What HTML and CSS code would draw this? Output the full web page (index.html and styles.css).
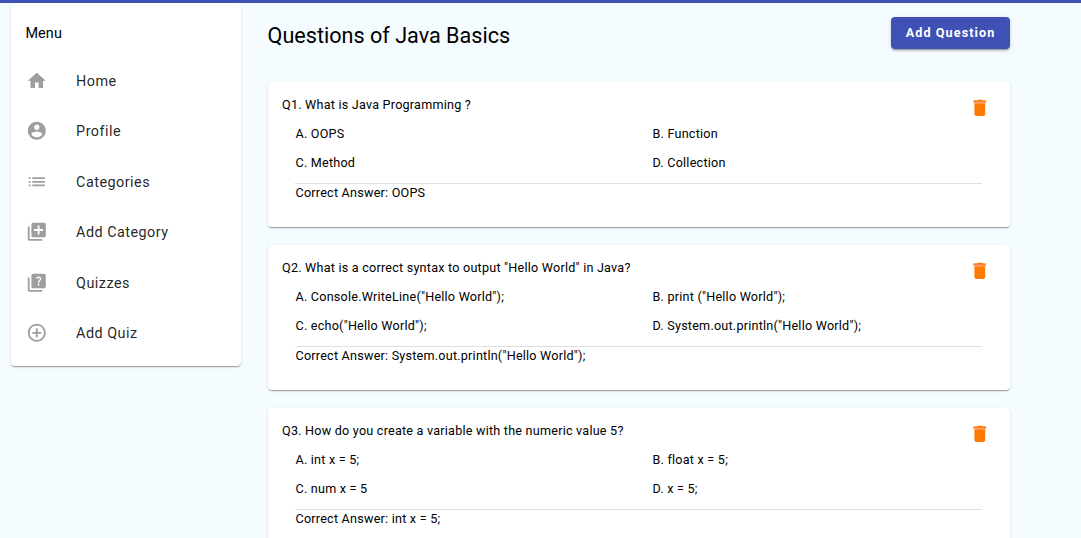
FILE: index.html
```html
<!DOCTYPE html>
<html lang="en">
<head>
    <meta charset="UTF-8">
    <meta name="viewport" content="width=device-width, initial-scale=1.0">
    <title>Questions of Java Basics</title>
    <link rel="stylesheet" href="styles.css">
</head>
<body>
    <div class="toolbar"></div>
    <div class="layout">
        <nav class="sidebar">
            <h3 class="menu-title">Menu</h3>
            <ul class="menu">
                <li>
                    <svg viewBox="0 0 24 24"><path d="M10 20v-6h4v6h5v-8h3L12 3 2 12h3v8z"/></svg>
                    <span>Home</span>
                </li>
                <li>
                    <svg viewBox="0 0 24 24"><path d="M12 2C6.48 2 2 6.48 2 12s4.48 10 10 10 10-4.48 10-10S17.52 2 12 2zm0 3c1.66 0 3 1.34 3 3s-1.34 3-3 3-3-1.34-3-3 1.34-3 3-3zm0 14.2c-2.5 0-4.71-1.28-6-3.22.03-1.99 4-3.08 6-3.08 1.99 0 5.97 1.09 6 3.08-1.29 1.94-3.5 3.22-6 3.22z"/></svg>
                    <span>Profile</span>
                </li>
                <li>
                    <svg viewBox="0 0 24 24"><path d="M3 13h2v-2H3v2zm0 4h2v-2H3v2zm0-8h2V7H3v2zm4 4h14v-2H7v2zm0 4h14v-2H7v2zM7 7v2h14V7H7z"/></svg>
                    <span>Categories</span>
                </li>
                <li>
                    <svg viewBox="0 0 24 24"><path d="M4 6H2v14c0 1.1.9 2 2 2h14v-2H4V6zm16-4H8c-1.1 0-2 .9-2 2v12c0 1.1.9 2 2 2h12c1.1 0 2-.9 2-2V4c0-1.1-.9-2-2-2zm-1 9h-4v4h-2v-4H9V9h4V5h2v4h4v2z"/></svg>
                    <span>Add Category</span>
                </li>
                <li>
                    <svg viewBox="0 0 24 24"><path d="M4 6H2v14c0 1.1.9 2 2 2h14v-2H4V6zm16-4H8c-1.1 0-2 .9-2 2v12c0 1.1.9 2 2 2h12c1.1 0 2-.9 2-2V4c0-1.1-.9-2-2-2zm-5.99 13c-.59 0-1.05-.47-1.05-1.05 0-.59.47-1.04 1.05-1.04.59 0 1.04.45 1.04 1.04-.01.58-.45 1.05-1.04 1.05zm2.5-6.17c-.63.93-1.23 1.21-1.56 1.81-.13.24-.18.4-.18 1.18h-1.52c0-.41-.06-1.08.26-1.65.41-.73 1.18-1.16 1.63-1.8.48-.68.21-1.94-1.14-1.94-.88 0-1.32.67-1.5 1.23l-1.37-.57C11.51 5.96 12.52 5 13.99 5c1.23 0 2.08.56 2.51 1.26.37.61.58 1.73.01 2.57z"/></svg>
                    <span>Quizzes</span>
                </li>
                <li>
                    <svg viewBox="0 0 24 24"><path d="M13 7h-2v4H7v2h4v4h2v-4h4v-2h-4V7zm-1-5C6.48 2 2 6.48 2 12s4.48 10 10 10 10-4.48 10-10S17.52 2 12 2zm0 18c-4.41 0-8-3.59-8-8s3.59-8 8-8 8 3.59 8 8-3.59 8-8 8z"/></svg>
                    <span>Add Quiz</span>
                </li>
            </ul>
        </nav>
        <main class="content">
            <div class="page-header">
                <h1>Questions of Java Basics</h1>
                <button class="add-btn">Add Question</button>
            </div>
            <div id="questionList"></div>
        </main>
    </div>
    <script>
        const questions = [
            {
                text: 'What is Java Programming ?',
                options: ['OOPS', 'Function', 'Method', 'Collection'],
                answer: 'OOPS'
            },
            {
                text: 'What is a correct syntax to output "Hello World" in Java?',
                options: ['Console.WriteLine("Hello World");', 'print ("Hello World");', 'echo("Hello World");', 'System.out.println("Hello World");'],
                answer: 'System.out.println("Hello World");'
            },
            {
                text: 'How do you create a variable with the numeric value 5?',
                options: ['int x = 5;', 'float x = 5;', 'num x = 5', 'x = 5;'],
                answer: 'int x = 5;'
            }
        ];
        const questionList = document.getElementById('questionList');
        questions.forEach((question, index) => {
            const card = document.createElement('div');
            card.className = 'card';
            card.innerHTML = `
                <div class="card-head">
                    <p>Q${index + 1}. ${question.text}</p>
                    <svg class="delete" viewBox="0 0 24 24"><path class="lid" d="M5 4h14v3H5z"/><path d="M6 19c0 1.1.9 2 2 2h8c1.1 0 2-.9 2-2V7H6v12z"/><path d="M19 4h-3.5l-1-1h-5l-1 1H5v1.2h14z"/></svg>
                </div>
                <div class="options">
                    ${question.options.map((option, i) => `<p>${'ABCD'[i]}. ${option}</p>`).join('')}
                </div>
                <p class="answer">Correct Answer: ${question.answer}</p>
            `;
            questionList.appendChild(card);
        });
    </script>
</body>
</html>
```
FILE: styles.css
```css
* {
    box-sizing: border-box;
}
body {
    margin: 0;
    height: 100vh;
    overflow: hidden;
    background: #f4fcff;
    font-family: Roboto, Arial, sans-serif;
    color: rgba(0, 0, 0, 0.87);
}
h1, h3, p, ul {
    margin: 0;
    padding: 0;
    font-weight: 400;
}
.toolbar {
    height: 3px;
    background: #3f51b5;
}
.layout {
    display: flex;
    align-items: flex-start;
}
.sidebar, .card {
    background: white;
    border-radius: 4px;
    box-shadow: 0 2px 1px -1px rgba(0, 0, 0, 0.2), 0 1px 1px 0 rgba(0, 0, 0, 0.14), 0 1px 3px 0 rgba(0, 0, 0, 0.12);
}
.sidebar {
    width: 230px;
    height: 363px;
    margin-left: 11px;
}
.menu-title {
    padding: 20px 14.4px 0;
    font-size: 14.4px;
    line-height: 21px;
    letter-spacing: 0.13px;
    color: black;
}
.menu {
    margin-top: 11.6px;
    list-style: none;
}
.menu li {
    display: flex;
    align-items: center;
    gap: 28.8px;
    height: 50.4px;
    padding-left: 14.7px;
    font-size: 14.4px;
    letter-spacing: 0.47px;
}
.menu span {
    padding-top: 1.4px;
}
.menu svg {
    width: 21.6px;
    height: 21.6px;
    fill: #9e9e9e;
}
.content {
    width: 742px;
    margin-left: 27px;
}
.page-header {
    display: flex;
    justify-content: space-between;
    align-items: flex-start;
    height: 79px;
    padding-top: 14px;
}
.page-header h1 {
    margin-left: -0.4px;
    padding-top: 4px;
    font-size: 21.6px;
    line-height: 29px;
    color: black;
}
.add-btn {
    width: 119px;
    height: 32px;
    padding: 0 0 2px;
    border: none;
    border-radius: 4px;
    background: #3f51b5;
    color: white;
    font-family: inherit;
    font-size: 12.6px;
    font-weight: 700;
    letter-spacing: 1.1px;
    box-shadow: 0 3px 1px -2px rgba(0, 0, 0, 0.2), 0 2px 2px 0 rgba(0, 0, 0, 0.14), 0 1px 5px 0 rgba(0, 0, 0, 0.12);
}
.card {
    height: 145px;
    margin-bottom: 18px;
    padding: 14px 28px 0 14px;
    font-size: 12.6px;
    line-height: 18px;
    letter-spacing: 0.225px;
    color: black;
}
.card-head {
    display: flex;
    justify-content: space-between;
    height: 29px;
}
.delete {
    width: 21.6px;
    height: 21.6px;
    margin: 1px -8.6px 0 0;
    fill: #ff7a00;
}
.delete .lid {
    fill: #ffa07a;
}
.options {
    display: grid;
    grid-template-columns: 357px 1fr;
    grid-auto-rows: 29px;
    margin-left: 13.5px;
}
.answer {
    margin-left: 13px;
    padding-left: 0.5px;
    border-top: 1px solid #e0e0e0;
}
```
